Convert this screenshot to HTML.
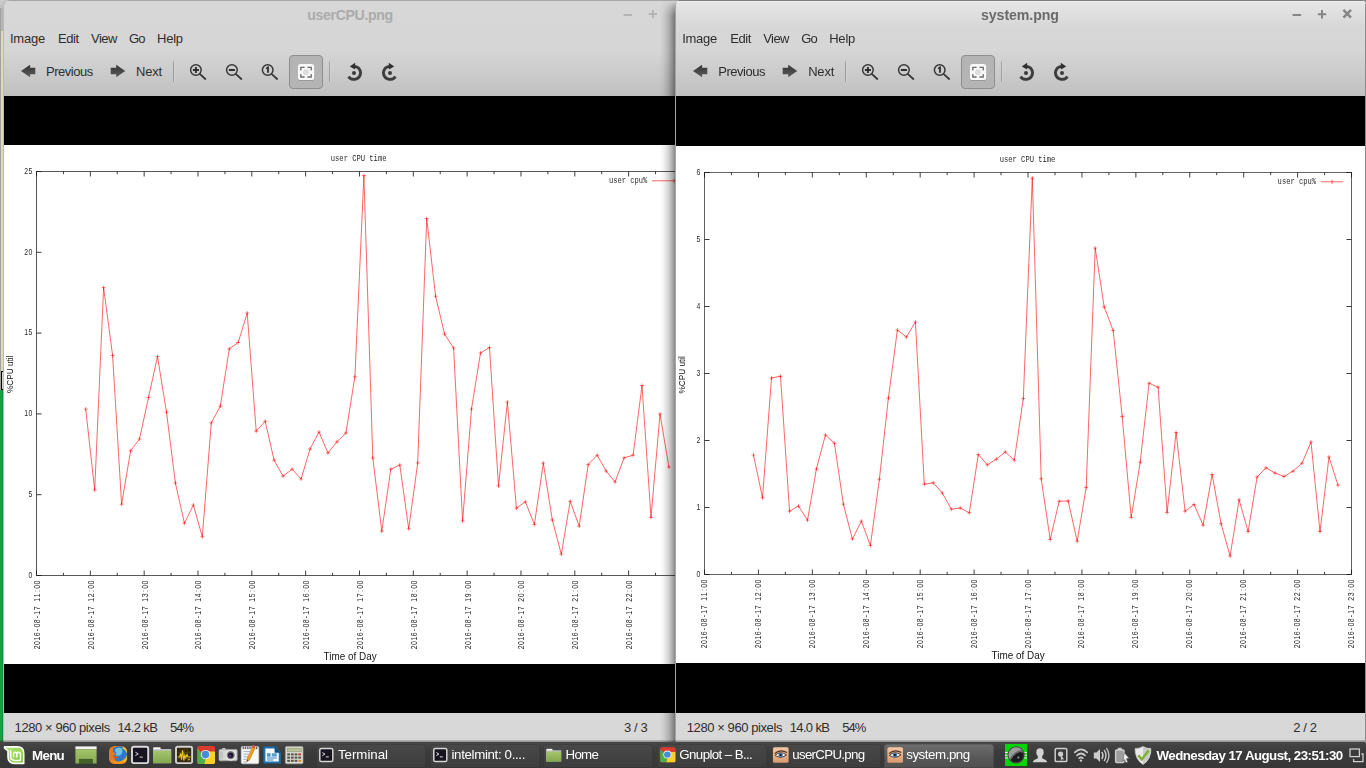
<!DOCTYPE html>
<html lang="en">
<head>
<meta charset="utf-8">
<title>Desktop</title>
<style>
html,body{margin:0;padding:0}
body{width:1366px;height:768px;overflow:hidden;position:relative;background:linear-gradient(90deg,#1d9e45 0,#1d9e45 2px,#178c3c 2px,#178c3c 3px,#1d9e45 3px);font-family:"Liberation Sans",sans-serif;font-size:13px;color:#2e2e2e}
.abs{position:absolute}
#strip{position:absolute;left:0;top:0;width:4px;height:390px;background:linear-gradient(90deg,#a2a2a0 0,#a2a2a0 1px,#dcdcb8 1px,#dcdcb8 3px,#b8b8b8 3px)}
#strip i{position:absolute;left:1px;top:371px;width:2px;height:19px;border:1px solid #000;border-right:0;box-sizing:border-box;width:3px;background:#d9dab9}
.win{position:absolute;top:0;height:743px;background:#d6d6d6;overflow:hidden;border-radius:5px 5px 0 0}
#w1{left:3px;width:700px;border-radius:7px 5px 0 0;border-left:1px solid #b9b9b9;box-sizing:border-box}
#w2{left:675px;width:691px;border-left:1px solid #a4a4a4;box-sizing:border-box;border-radius:5px 5px 0 0}
#shadow{position:absolute;left:660px;top:0;width:15px;height:743px;background:linear-gradient(90deg,rgba(0,0,0,0),rgba(0,0,0,.05) 25%,rgba(0,0,0,.16) 55%,rgba(0,0,0,.32) 82%,rgba(0,0,0,.46));-webkit-mask-image:linear-gradient(180deg,rgba(0,0,0,0) 0,rgba(0,0,0,.6) 8px,#000 16px);mask-image:linear-gradient(180deg,rgba(0,0,0,0) 0,rgba(0,0,0,.6) 8px,#000 16px)}
.chrome{position:absolute;left:0;top:0;right:0;height:96px;background:linear-gradient(#a6a6a6 0,#a6a6a6 1px,#d7d7d7 1px,#d6d6d6 50px,#c0c0c0 96px)}
#w2 .chrome{background:linear-gradient(#7c7c7c 0,#7c7c7c 1px,#f3f3f3 1px,#e6e6e6 2.5px,#d7d7d7 27px,#d6d6d6 50px,#c0c0c0 96px)}
.title{position:absolute;top:6px;left:0;right:0;text-align:center;font-weight:bold;font-size:13.5px;line-height:18px}
.canvas{position:absolute;left:0;right:0;top:96px;height:617px;background:#000}
.status{position:absolute;left:0;right:0;top:713px;height:30px;background:#d8d8d8}
.t{position:absolute;white-space:nowrap;line-height:16px}
svg{position:absolute;overflow:visible}
svg.plot{overflow:hidden;will-change:transform}
.gd text{font-family:"Liberation Mono",monospace;font-size:9.4px;fill:#2a2a2a}
.gd text.n{font-family:"Liberation Sans",sans-serif;font-size:8.6px}
text.tt{font-family:"Liberation Sans",sans-serif;fill:#161616}
#panel{position:absolute;left:0;top:743px;width:1366px;height:25px;background:linear-gradient(#454545,#3a3a3a 40%,#373737);color:#fff}
#panel:before{content:'';position:absolute;left:0;right:0;top:-3px;height:3px;background:linear-gradient(rgba(0,0,0,.08),rgba(0,0,0,.3) 34%,rgba(0,0,0,.3) 66%,#464646 67%,#464646)}
.tb{position:absolute;top:1px;height:24px;width:110px;border-radius:4px 4px 0 0;background:linear-gradient(#484848,#3d3d3d);box-shadow:inset 0 0 0 1px rgba(0,0,0,.12)}
.tb.on{background:linear-gradient(#6e6e6e,#575757 60%,#505050)}
.pt{position:absolute;white-space:nowrap;color:#fff;font-size:13.3px;line-height:16px;top:4px}
</style>
</head>
<body>
<div id="strip"><i></i></div>
<div class="abs" style="left:0;top:0;width:4px;height:31px;background:linear-gradient(90deg,#a2a2a2 1px,#b4b4b4 1px)"></div><div class="abs" style="left:0;top:0;width:12px;height:8px;background:linear-gradient(135deg,#d2d2d2,#b4b4b4 70%)"></div>

<!-- LEFT WINDOW -->
<div class="win" id="w1">
 <div class="chrome"></div>
 <svg class="abs" style="left:0;top:0" width="420" height="96" viewBox="4 0 420 96">
<defs>
<linearGradient id="ag1" x1="0" y1="0" x2="0" y2="1"><stop offset="0" stop-color="#343434"/><stop offset="1" stop-color="#5c5c5c"/></linearGradient>
</defs>
<path d="M21 71L30.1 64.7V67.7H35.3V74.3H30.1V77.3Z" fill="url(#ag1)"/>
<path d="M125.3 71L116.2 64.7V67.7H110.7V74.3H116.2V77.3Z" fill="url(#ag1)"/>
<path d="M173.5 61.5V82M329.6 61.5V82" stroke="#9b9b9b" stroke-width="1"/>
<path d="M174.5 61.5V82M330.6 61.5V82" stroke="#dcdcdc" stroke-width="1" stroke-opacity=".6"/>
<g fill="none" stroke="#383838" stroke-width="1.5">
<circle cx="195.9" cy="70" r="5.3"/><circle cx="231.9" cy="70" r="5.3"/><circle cx="267.7" cy="70" r="5.3"/>
<path d="M200 74.1L205.3 79M236 74.1L241.3 79M271.8 74.1L277.1 79" stroke-width="1.8" stroke-linecap="round"/>
</g>
<path d="M192.9 70H198.9M195.9 67V73M228.9 70H234.9" stroke="#2e2e2e" stroke-width="1.9" fill="none"/>
<path d="M266.2 68.6L268 67.3V72.8" stroke="#2a2a2a" stroke-width="1.7" fill="none"/>
<rect x="289.5" y="55.5" width="33" height="33" rx="3.5" fill="#b4b4b4" stroke="#8f8f8f"/>
<rect x="298" y="64.8" width="16.2" height="16" rx="2.6" fill="#8e8e8e"/><rect x="298" y="64.1" width="16.2" height="16" rx="2.6" fill="#f8f8f8"/>
<circle cx="306" cy="72.2" r="3" fill="#dcdcdc"/>
<path d="M300.8 70.4V67.4H304.6M307.4 67.4H311.2V70.4M311.2 74V77H307.4M304.6 77H300.8V74" fill="none" stroke="#6c6c6c" stroke-width="1.3"/>
<g fill="none" stroke="#3c3c3c" stroke-width="2.8">
<path d="M354.6 66.3A6.6 6.6 0 1 1 348.5 76.6"/>
<path d="M389.4 66.3A6.6 6.6 0 1 0 395.5 76.6"/>
</g>
<path d="M349.8 66.4L355.2 62.7V69.4Z" fill="#2e2e2e"/>
<path d="M394.2 66.4L388.8 62.7V69.4Z" fill="#2e2e2e"/>
<circle cx="354" cy="72.9" r="2" fill="#3a3a3a"/><circle cx="390" cy="72.9" r="2" fill="#3a3a3a"/>
</svg><svg class="abs" style="left:606px;top:0" width="66" height="28" viewBox="610 0 66 28"><g fill="none" stroke="#b3b3b3" stroke-width="1.8"><path d="M623.6 15H632"/><path d="M648.8 14.2H657M652.9 10.1V18.3"/></g></svg><span class="t" style="left:6.0px;top:31.0px;letter-spacing:-0.254px;">Image</span>
<span class="t" style="left:54.0px;top:31.0px;letter-spacing:-0.401px;">Edit</span>
<span class="t" style="left:87.0px;top:31.0px;letter-spacing:-0.557px;">View</span>
<span class="t" style="left:125.0px;top:31.0px;letter-spacing:-0.903px;">Go</span>
<span class="t" style="left:153.0px;top:31.0px;letter-spacing:-0.214px;">Help</span>
<span class="t" style="left:42.0px;top:63.9px;letter-spacing:-0.478px;">Previous</span>
<span class="t" style="left:132.0px;top:63.9px;letter-spacing:-0.209px;">Next</span>
<span class="t" style="left:303.3px;top:6.7px;letter-spacing:-0.398px;font-weight:bold;color:#ababab;font-size:14.2px">userCPU.png</span>
 <div class="canvas"></div>
 <div class="status"></div>
 <span class="t" style="left:10.6px;top:719.5px;letter-spacing:-0.417px;">1280 × 960 pixels</span>
<span class="t" style="left:113.5px;top:719.5px;letter-spacing:-0.630px;">14.2 kB</span>
<span class="t" style="left:166.0px;top:719.5px;letter-spacing:-1.009px;">54%</span>
<span class="t" style="left:620.0px;top:719.5px;letter-spacing:-0.402px;">3 / 3</span>
</div>
<svg class="plot" style="left:4px;top:145px" width="692" height="519" viewBox="4 145 692 519">
<rect x="4" y="145" width="692" height="519" fill="#fff"/>
<rect x="36.5" y="171.5" width="646.0" height="404.0" fill="none" stroke="#585858" stroke-width="1" shape-rendering="crispEdges"/>
<path d="M36.50 575.5v-5M36.50 171.5v5M63.41 575.5v-2.7M63.41 171.5v2.7M90.33 575.5v-5M90.33 171.5v5M117.25 575.5v-2.7M117.25 171.5v2.7M144.16 575.5v-5M144.16 171.5v5M171.07 575.5v-2.7M171.07 171.5v2.7M197.99 575.5v-5M197.99 171.5v5M224.91 575.5v-2.7M224.91 171.5v2.7M251.82 575.5v-5M251.82 171.5v5M278.74 575.5v-2.7M278.74 171.5v2.7M305.65 575.5v-5M305.65 171.5v5M332.56 575.5v-2.7M332.56 171.5v2.7M359.48 575.5v-5M359.48 171.5v5M386.40 575.5v-2.7M386.40 171.5v2.7M413.31 575.5v-5M413.31 171.5v5M440.23 575.5v-2.7M440.23 171.5v2.7M467.14 575.5v-5M467.14 171.5v5M494.06 575.5v-2.7M494.06 171.5v2.7M520.97 575.5v-5M520.97 171.5v5M547.88 575.5v-2.7M547.88 171.5v2.7M574.80 575.5v-5M574.80 171.5v5M601.71 575.5v-2.7M601.71 171.5v2.7M628.63 575.5v-5M628.63 171.5v5M655.54 575.5v-2.7M655.54 171.5v2.7M682.46 575.5v-5M682.46 171.5v5M36.5 575.50h5M682.5 575.50h-5M36.5 494.70h5M682.5 494.70h-5M36.5 413.90h5M682.5 413.90h-5M36.5 333.10h5M682.5 333.10h-5M36.5 252.30h5M682.5 252.30h-5M36.5 171.50h5M682.5 171.50h-5" fill="none" stroke="#1a1a1a" stroke-width=".85"/>
<g class="gd">
<text class="n" transform="translate(28.58 577.80) scale(0.8 1)" x="-0.00" y="0">0</text>
<text class="n" transform="translate(28.58 497.00) scale(0.8 1)" x="-0.00" y="0">5</text>
<text class="n" transform="translate(24.26 416.20) scale(0.8 1)" x="-0.00 5.40" y="0">10</text>
<text class="n" transform="translate(24.26 335.40) scale(0.8 1)" x="-0.00 5.40" y="0">15</text>
<text class="n" transform="translate(24.26 254.60) scale(0.8 1)" x="-0.00 5.40" y="0">20</text>
<text class="n" transform="translate(24.26 173.80) scale(0.8 1)" x="-0.00 5.40" y="0">25</text>
<text class="n" transform="translate(39.90 649.20) rotate(-90) scale(0.8 1)" x="-0.00 5.40 10.80 16.20 22.56 27.00 32.40 38.76 43.20 48.60 55.19 59.40 64.80 71.39 75.60 81.00" y="0">2016-08-17 11:00</text>
<text class="n" transform="translate(93.73 649.20) rotate(-90) scale(0.8 1)" x="-0.00 5.40 10.80 16.20 22.56 27.00 32.40 38.76 43.20 48.60 55.19 59.40 64.80 71.39 75.60 81.00" y="0">2016-08-17 12:00</text>
<text class="n" transform="translate(147.56 649.20) rotate(-90) scale(0.8 1)" x="-0.00 5.40 10.80 16.20 22.56 27.00 32.40 38.76 43.20 48.60 55.19 59.40 64.80 71.39 75.60 81.00" y="0">2016-08-17 13:00</text>
<text class="n" transform="translate(201.39 649.20) rotate(-90) scale(0.8 1)" x="-0.00 5.40 10.80 16.20 22.56 27.00 32.40 38.76 43.20 48.60 55.19 59.40 64.80 71.39 75.60 81.00" y="0">2016-08-17 14:00</text>
<text class="n" transform="translate(255.22 649.20) rotate(-90) scale(0.8 1)" x="-0.00 5.40 10.80 16.20 22.56 27.00 32.40 38.76 43.20 48.60 55.19 59.40 64.80 71.39 75.60 81.00" y="0">2016-08-17 15:00</text>
<text class="n" transform="translate(309.05 649.20) rotate(-90) scale(0.8 1)" x="-0.00 5.40 10.80 16.20 22.56 27.00 32.40 38.76 43.20 48.60 55.19 59.40 64.80 71.39 75.60 81.00" y="0">2016-08-17 16:00</text>
<text class="n" transform="translate(362.88 649.20) rotate(-90) scale(0.8 1)" x="-0.00 5.40 10.80 16.20 22.56 27.00 32.40 38.76 43.20 48.60 55.19 59.40 64.80 71.39 75.60 81.00" y="0">2016-08-17 17:00</text>
<text class="n" transform="translate(416.71 649.20) rotate(-90) scale(0.8 1)" x="-0.00 5.40 10.80 16.20 22.56 27.00 32.40 38.76 43.20 48.60 55.19 59.40 64.80 71.39 75.60 81.00" y="0">2016-08-17 18:00</text>
<text class="n" transform="translate(470.54 649.20) rotate(-90) scale(0.8 1)" x="-0.00 5.40 10.80 16.20 22.56 27.00 32.40 38.76 43.20 48.60 55.19 59.40 64.80 71.39 75.60 81.00" y="0">2016-08-17 19:00</text>
<text class="n" transform="translate(524.37 649.20) rotate(-90) scale(0.8 1)" x="-0.00 5.40 10.80 16.20 22.56 27.00 32.40 38.76 43.20 48.60 55.19 59.40 64.80 71.39 75.60 81.00" y="0">2016-08-17 20:00</text>
<text class="n" transform="translate(578.20 649.20) rotate(-90) scale(0.8 1)" x="-0.00 5.40 10.80 16.20 22.56 27.00 32.40 38.76 43.20 48.60 55.19 59.40 64.80 71.39 75.60 81.00" y="0">2016-08-17 21:00</text>
<text class="n" transform="translate(632.03 649.20) rotate(-90) scale(0.8 1)" x="-0.00 5.40 10.80 16.20 22.56 27.00 32.40 38.76 43.20 48.60 55.19 59.40 64.80 71.39 75.60 81.00" y="0">2016-08-17 22:00</text>
<text class="n" transform="translate(685.86 649.20) rotate(-90) scale(0.8 1)" x="-0.00 5.40 10.80 16.20 22.56 27.00 32.40 38.76 43.20 48.60 55.19 59.40 64.80 71.39 75.60 81.00" y="0">2016-08-17 23:00</text>
<text transform="translate(330.80 161.00)" textLength="55.66" lengthAdjust="spacingAndGlyphs">user CPU time</text>
<text transform="translate(608.92 183.40)" textLength="38.38" lengthAdjust="spacingAndGlyphs">user cpu%</text>
</g>
<text class="tt" style="font-size:9.8px" transform="translate(13.2 393) rotate(-90)" textLength="37.4" lengthAdjust="spacingAndGlyphs">%CPU util</text>
<text class="tt" style="font-size:10.9px" x="323.6" y="659.9" textLength="53" lengthAdjust="spacingAndGlyphs">Time of Day</text>
<g fill="none" stroke="#f00" stroke-width=".75" stroke-opacity=".8">
<polyline points="85.7,409.0 94.7,490.0 103.6,287.5 112.6,355.5 121.6,504.2 130.6,450.8 139.5,439.0 148.5,397.5 157.5,356.5 166.5,412.2 175.4,483.0 184.4,523.2 193.4,505.0 202.3,536.8 211.3,422.8 220.3,406.2 229.3,348.8 238.2,342.5 247.2,313.0 256.2,431.2 265.2,421.2 274.1,460.2 283.1,476.2 292.1,469.2 301.1,479.0 310.0,449.0 319.0,432.0 328.0,453.0 336.9,441.8 345.9,433.0 354.9,376.8 363.9,175.5 372.8,458.0 381.8,531.2 390.8,469.2 399.8,465.0 408.7,528.8 417.7,463.0 426.7,218.5 435.6,296.2 444.6,334.2 453.6,348.0 462.6,521.0 471.5,409.0 480.5,353.0 489.5,347.5 498.5,486.0 507.4,402.0 516.4,508.2 525.4,501.8 534.4,524.5 543.3,463.0 552.3,520.0 561.3,554.2 570.2,501.2 579.2,526.2 588.2,464.5 597.2,455.2 606.1,471.0 615.1,482.0 624.1,457.8 633.1,455.2 642.0,385.5 651.0,517.5 660.0,414.0 668.9,467.0"/>
<path d="M83.7 409.0h4M85.7 407.0v4M92.7 490.0h4M94.7 488.0v4M101.6 287.5h4M103.6 285.5v4M110.6 355.5h4M112.6 353.5v4M119.6 504.2h4M121.6 502.2v4M128.6 450.8h4M130.6 448.8v4M137.5 439.0h4M139.5 437.0v4M146.5 397.5h4M148.5 395.5v4M155.5 356.5h4M157.5 354.5v4M164.5 412.2h4M166.5 410.2v4M173.4 483.0h4M175.4 481.0v4M182.4 523.2h4M184.4 521.2v4M191.4 505.0h4M193.4 503.0v4M200.3 536.8h4M202.3 534.8v4M209.3 422.8h4M211.3 420.8v4M218.3 406.2h4M220.3 404.2v4M227.3 348.8h4M229.3 346.8v4M236.2 342.5h4M238.2 340.5v4M245.2 313.0h4M247.2 311.0v4M254.2 431.2h4M256.2 429.2v4M263.2 421.2h4M265.2 419.2v4M272.1 460.2h4M274.1 458.2v4M281.1 476.2h4M283.1 474.2v4M290.1 469.2h4M292.1 467.2v4M299.1 479.0h4M301.1 477.0v4M308.0 449.0h4M310.0 447.0v4M317.0 432.0h4M319.0 430.0v4M326.0 453.0h4M328.0 451.0v4M334.9 441.8h4M336.9 439.8v4M343.9 433.0h4M345.9 431.0v4M352.9 376.8h4M354.9 374.8v4M361.9 175.5h4M363.9 173.5v4M370.8 458.0h4M372.8 456.0v4M379.8 531.2h4M381.8 529.2v4M388.8 469.2h4M390.8 467.2v4M397.8 465.0h4M399.8 463.0v4M406.7 528.8h4M408.7 526.8v4M415.7 463.0h4M417.7 461.0v4M424.7 218.5h4M426.7 216.5v4M433.6 296.2h4M435.6 294.2v4M442.6 334.2h4M444.6 332.2v4M451.6 348.0h4M453.6 346.0v4M460.6 521.0h4M462.6 519.0v4M469.5 409.0h4M471.5 407.0v4M478.5 353.0h4M480.5 351.0v4M487.5 347.5h4M489.5 345.5v4M496.5 486.0h4M498.5 484.0v4M505.4 402.0h4M507.4 400.0v4M514.4 508.2h4M516.4 506.2v4M523.4 501.8h4M525.4 499.8v4M532.4 524.5h4M534.4 522.5v4M541.3 463.0h4M543.3 461.0v4M550.3 520.0h4M552.3 518.0v4M559.3 554.2h4M561.3 552.2v4M568.2 501.2h4M570.2 499.2v4M577.2 526.2h4M579.2 524.2v4M586.2 464.5h4M588.2 462.5v4M595.2 455.2h4M597.2 453.2v4M604.1 471.0h4M606.1 469.0v4M613.1 482.0h4M615.1 480.0v4M622.1 457.8h4M624.1 455.8v4M631.1 455.2h4M633.1 453.2v4M640.0 385.5h4M642.0 383.5v4M649.0 517.5h4M651.0 515.5v4M658.0 414.0h4M660.0 412.0v4M666.9 467.0h4M668.9 465.0v4" stroke-width=".6"/>
<path d="M652 180.8H696M674.0 178.8v4"/>
</g>
</svg>

<div id="shadow"></div>
<div class="abs" style="left:1358px;top:0;width:8px;height:8px;background:#8b8b8b"></div>
<!-- RIGHT WINDOW -->
<div class="win" id="w2">
 <div class="chrome"></div>
 <svg class="abs" style="left:0;top:0" width="420" height="96" viewBox="4 0 420 96">
<defs>
<linearGradient id="ag2" x1="0" y1="0" x2="0" y2="1"><stop offset="0" stop-color="#343434"/><stop offset="1" stop-color="#5c5c5c"/></linearGradient>
</defs>
<path d="M21 71L30.1 64.7V67.7H35.3V74.3H30.1V77.3Z" fill="url(#ag2)"/>
<path d="M125.3 71L116.2 64.7V67.7H110.7V74.3H116.2V77.3Z" fill="url(#ag2)"/>
<path d="M173.5 61.5V82M329.6 61.5V82" stroke="#9b9b9b" stroke-width="1"/>
<path d="M174.5 61.5V82M330.6 61.5V82" stroke="#dcdcdc" stroke-width="1" stroke-opacity=".6"/>
<g fill="none" stroke="#383838" stroke-width="1.5">
<circle cx="195.9" cy="70" r="5.3"/><circle cx="231.9" cy="70" r="5.3"/><circle cx="267.7" cy="70" r="5.3"/>
<path d="M200 74.1L205.3 79M236 74.1L241.3 79M271.8 74.1L277.1 79" stroke-width="1.8" stroke-linecap="round"/>
</g>
<path d="M192.9 70H198.9M195.9 67V73M228.9 70H234.9" stroke="#2e2e2e" stroke-width="1.9" fill="none"/>
<path d="M266.2 68.6L268 67.3V72.8" stroke="#2a2a2a" stroke-width="1.7" fill="none"/>
<rect x="289.5" y="55.5" width="33" height="33" rx="3.5" fill="#b4b4b4" stroke="#8f8f8f"/>
<rect x="298" y="64.8" width="16.2" height="16" rx="2.6" fill="#8e8e8e"/><rect x="298" y="64.1" width="16.2" height="16" rx="2.6" fill="#f8f8f8"/>
<circle cx="306" cy="72.2" r="3" fill="#dcdcdc"/>
<path d="M300.8 70.4V67.4H304.6M307.4 67.4H311.2V70.4M311.2 74V77H307.4M304.6 77H300.8V74" fill="none" stroke="#6c6c6c" stroke-width="1.3"/>
<g fill="none" stroke="#3c3c3c" stroke-width="2.8">
<path d="M354.6 66.3A6.6 6.6 0 1 1 348.5 76.6"/>
<path d="M389.4 66.3A6.6 6.6 0 1 0 395.5 76.6"/>
</g>
<path d="M349.8 66.4L355.2 62.7V69.4Z" fill="#2e2e2e"/>
<path d="M394.2 66.4L388.8 62.7V69.4Z" fill="#2e2e2e"/>
<circle cx="354" cy="72.9" r="2" fill="#3a3a3a"/><circle cx="390" cy="72.9" r="2" fill="#3a3a3a"/>
</svg><svg class="abs" style="left:604px;top:0" width="86" height="28" viewBox="1280 0 86 28"><g fill="none" stroke="#868686" stroke-width="2"><path d="M1292.5 15H1301.2"/><path d="M1317.8 14.2H1326.2M1322 10V18.4"/><path d="M1343.4 9.8L1351 17.6M1351 9.8L1343.4 17.6" stroke-width="2.4"/></g></svg><span class="t" style="left:6.2px;top:31.0px;letter-spacing:-0.254px;">Image</span>
<span class="t" style="left:54.2px;top:31.0px;letter-spacing:-0.401px;">Edit</span>
<span class="t" style="left:87.2px;top:31.0px;letter-spacing:-0.557px;">View</span>
<span class="t" style="left:125.2px;top:31.0px;letter-spacing:-0.903px;">Go</span>
<span class="t" style="left:153.2px;top:31.0px;letter-spacing:-0.214px;">Help</span>
<span class="t" style="left:42.2px;top:63.9px;letter-spacing:-0.478px;">Previous</span>
<span class="t" style="left:132.2px;top:63.9px;letter-spacing:-0.209px;">Next</span>
<span class="t" style="left:305.0px;top:6.7px;letter-spacing:-0.089px;font-weight:bold;color:#6b6b6b;font-size:14.2px">system.png</span>
 <div class="canvas"></div>
 <div class="status"></div>
 <span class="t" style="left:10.8px;top:719.5px;letter-spacing:-0.417px;">1280 × 960 pixels</span>
<span class="t" style="left:113.7px;top:719.5px;letter-spacing:-0.630px;">14.0 kB</span>
<span class="t" style="left:166.2px;top:719.5px;letter-spacing:-1.009px;">54%</span>
<span class="t" style="left:617.2px;top:719.5px;letter-spacing:-0.379px;">2 / 2</span>
</div>
<div class="abs" style="left:1365px;top:4px;width:1px;height:739px;background:#8c8c8c;z-index:5"></div>
<svg class="plot" style="left:676px;top:146px" width="689" height="517" viewBox="676 146 689 517">
<rect x="676" y="146" width="689" height="517" fill="#fff"/>
<rect x="704.5" y="172.5" width="647.0" height="402.0" fill="none" stroke="#626262" stroke-width="1" shape-rendering="crispEdges"/>
<path d="M704.50 574.5v-5M704.50 172.5v5M731.46 574.5v-2.7M731.46 172.5v2.7M758.42 574.5v-5M758.42 172.5v5M785.38 574.5v-2.7M785.38 172.5v2.7M812.34 574.5v-5M812.34 172.5v5M839.30 574.5v-2.7M839.30 172.5v2.7M866.26 574.5v-5M866.26 172.5v5M893.22 574.5v-2.7M893.22 172.5v2.7M920.18 574.5v-5M920.18 172.5v5M947.14 574.5v-2.7M947.14 172.5v2.7M974.10 574.5v-5M974.10 172.5v5M1001.06 574.5v-2.7M1001.06 172.5v2.7M1028.02 574.5v-5M1028.02 172.5v5M1054.98 574.5v-2.7M1054.98 172.5v2.7M1081.94 574.5v-5M1081.94 172.5v5M1108.90 574.5v-2.7M1108.90 172.5v2.7M1135.86 574.5v-5M1135.86 172.5v5M1162.82 574.5v-2.7M1162.82 172.5v2.7M1189.78 574.5v-5M1189.78 172.5v5M1216.74 574.5v-2.7M1216.74 172.5v2.7M1243.70 574.5v-5M1243.70 172.5v5M1270.66 574.5v-2.7M1270.66 172.5v2.7M1297.62 574.5v-5M1297.62 172.5v5M1324.58 574.5v-2.7M1324.58 172.5v2.7M1351.54 574.5v-5M1351.54 172.5v5M704.5 574.50h5M1351.5 574.50h-5M704.5 507.50h5M1351.5 507.50h-5M704.5 440.50h5M1351.5 440.50h-5M704.5 373.50h5M1351.5 373.50h-5M704.5 306.50h5M1351.5 306.50h-5M704.5 239.50h5M1351.5 239.50h-5M704.5 172.50h5M1351.5 172.50h-5" fill="none" stroke="#1a1a1a" stroke-width=".85"/>
<g class="gd">
<text class="n" transform="translate(696.58 576.80) scale(0.8 1)" x="-0.00" y="0">0</text>
<text class="n" transform="translate(696.58 509.80) scale(0.8 1)" x="-0.00" y="0">1</text>
<text class="n" transform="translate(696.58 442.80) scale(0.8 1)" x="-0.00" y="0">2</text>
<text class="n" transform="translate(696.58 375.80) scale(0.8 1)" x="-0.00" y="0">3</text>
<text class="n" transform="translate(696.58 308.80) scale(0.8 1)" x="-0.00" y="0">4</text>
<text class="n" transform="translate(696.58 241.80) scale(0.8 1)" x="-0.00" y="0">5</text>
<text class="n" transform="translate(696.58 174.80) scale(0.8 1)" x="-0.00" y="0">6</text>
<text class="n" transform="translate(707.00 648.20) rotate(-90) scale(0.8 1)" x="-0.00 5.40 10.80 16.20 22.56 27.00 32.40 38.76 43.20 48.60 55.19 59.40 64.80 71.39 75.60 81.00" y="0">2016-08-17 11:00</text>
<text class="n" transform="translate(760.92 648.20) rotate(-90) scale(0.8 1)" x="-0.00 5.40 10.80 16.20 22.56 27.00 32.40 38.76 43.20 48.60 55.19 59.40 64.80 71.39 75.60 81.00" y="0">2016-08-17 12:00</text>
<text class="n" transform="translate(814.84 648.20) rotate(-90) scale(0.8 1)" x="-0.00 5.40 10.80 16.20 22.56 27.00 32.40 38.76 43.20 48.60 55.19 59.40 64.80 71.39 75.60 81.00" y="0">2016-08-17 13:00</text>
<text class="n" transform="translate(868.76 648.20) rotate(-90) scale(0.8 1)" x="-0.00 5.40 10.80 16.20 22.56 27.00 32.40 38.76 43.20 48.60 55.19 59.40 64.80 71.39 75.60 81.00" y="0">2016-08-17 14:00</text>
<text class="n" transform="translate(922.68 648.20) rotate(-90) scale(0.8 1)" x="-0.00 5.40 10.80 16.20 22.56 27.00 32.40 38.76 43.20 48.60 55.19 59.40 64.80 71.39 75.60 81.00" y="0">2016-08-17 15:00</text>
<text class="n" transform="translate(976.60 648.20) rotate(-90) scale(0.8 1)" x="-0.00 5.40 10.80 16.20 22.56 27.00 32.40 38.76 43.20 48.60 55.19 59.40 64.80 71.39 75.60 81.00" y="0">2016-08-17 16:00</text>
<text class="n" transform="translate(1030.52 648.20) rotate(-90) scale(0.8 1)" x="-0.00 5.40 10.80 16.20 22.56 27.00 32.40 38.76 43.20 48.60 55.19 59.40 64.80 71.39 75.60 81.00" y="0">2016-08-17 17:00</text>
<text class="n" transform="translate(1084.44 648.20) rotate(-90) scale(0.8 1)" x="-0.00 5.40 10.80 16.20 22.56 27.00 32.40 38.76 43.20 48.60 55.19 59.40 64.80 71.39 75.60 81.00" y="0">2016-08-17 18:00</text>
<text class="n" transform="translate(1138.36 648.20) rotate(-90) scale(0.8 1)" x="-0.00 5.40 10.80 16.20 22.56 27.00 32.40 38.76 43.20 48.60 55.19 59.40 64.80 71.39 75.60 81.00" y="0">2016-08-17 19:00</text>
<text class="n" transform="translate(1192.28 648.20) rotate(-90) scale(0.8 1)" x="-0.00 5.40 10.80 16.20 22.56 27.00 32.40 38.76 43.20 48.60 55.19 59.40 64.80 71.39 75.60 81.00" y="0">2016-08-17 20:00</text>
<text class="n" transform="translate(1246.20 648.20) rotate(-90) scale(0.8 1)" x="-0.00 5.40 10.80 16.20 22.56 27.00 32.40 38.76 43.20 48.60 55.19 59.40 64.80 71.39 75.60 81.00" y="0">2016-08-17 21:00</text>
<text class="n" transform="translate(1300.12 648.20) rotate(-90) scale(0.8 1)" x="-0.00 5.40 10.80 16.20 22.56 27.00 32.40 38.76 43.20 48.60 55.19 59.40 64.80 71.39 75.60 81.00" y="0">2016-08-17 22:00</text>
<text class="n" transform="translate(1354.04 648.20) rotate(-90) scale(0.8 1)" x="-0.00 5.40 10.80 16.20 22.56 27.00 32.40 38.76 43.20 48.60 55.19 59.40 64.80 71.39 75.60 81.00" y="0">2016-08-17 23:00</text>
<text transform="translate(999.70 162.00)" textLength="55.66" lengthAdjust="spacingAndGlyphs">user CPU time</text>
<text transform="translate(1277.62 184.40)" textLength="38.38" lengthAdjust="spacingAndGlyphs">user cpu%</text>
</g>
<text class="tt" style="font-size:9.8px" transform="translate(685.2 393.5) rotate(-90)" textLength="37.4" lengthAdjust="spacingAndGlyphs">%CPU util</text>
<text class="tt" style="font-size:10.9px" x="991.6" y="658.9" textLength="53" lengthAdjust="spacingAndGlyphs">Time of Day</text>
<g fill="none" stroke="#f00" stroke-width=".75" stroke-opacity=".8">
<polyline points="753.5,455.0 762.5,497.8 771.5,378.0 780.5,376.2 789.5,511.2 798.5,506.0 807.5,520.2 816.4,469.0 825.4,435.0 834.4,443.2 843.4,504.2 852.4,539.0 861.4,521.2 870.4,545.5 879.4,479.2 888.4,398.0 897.4,330.0 906.4,337.0 915.4,322.0 924.3,484.2 933.3,482.8 942.3,493.0 951.3,509.2 960.3,508.0 969.3,512.8 978.3,454.5 987.3,464.8 996.3,459.2 1005.3,452.0 1014.3,460.2 1023.3,398.5 1032.3,178.0 1041.2,478.8 1050.2,539.5 1059.2,501.2 1068.2,501.0 1077.2,541.2 1086.2,487.5 1095.2,248.0 1104.2,307.0 1113.2,330.5 1122.2,416.5 1131.2,517.5 1140.2,462.2 1149.1,383.2 1158.1,387.2 1167.1,512.5 1176.1,432.5 1185.1,511.2 1194.1,504.5 1203.1,525.2 1212.1,474.5 1221.1,523.8 1230.1,556.0 1239.1,499.8 1248.1,531.5 1257.1,477.0 1266.0,467.8 1275.0,473.0 1284.0,476.5 1293.0,471.2 1302.0,463.2 1311.0,442.0 1320.0,531.5 1329.0,457.0 1338.0,485.2"/>
<path d="M751.5 455.0h4M753.5 453.0v4M760.5 497.8h4M762.5 495.8v4M769.5 378.0h4M771.5 376.0v4M778.5 376.2h4M780.5 374.2v4M787.5 511.2h4M789.5 509.2v4M796.5 506.0h4M798.5 504.0v4M805.5 520.2h4M807.5 518.2v4M814.4 469.0h4M816.4 467.0v4M823.4 435.0h4M825.4 433.0v4M832.4 443.2h4M834.4 441.2v4M841.4 504.2h4M843.4 502.2v4M850.4 539.0h4M852.4 537.0v4M859.4 521.2h4M861.4 519.2v4M868.4 545.5h4M870.4 543.5v4M877.4 479.2h4M879.4 477.2v4M886.4 398.0h4M888.4 396.0v4M895.4 330.0h4M897.4 328.0v4M904.4 337.0h4M906.4 335.0v4M913.4 322.0h4M915.4 320.0v4M922.3 484.2h4M924.3 482.2v4M931.3 482.8h4M933.3 480.8v4M940.3 493.0h4M942.3 491.0v4M949.3 509.2h4M951.3 507.2v4M958.3 508.0h4M960.3 506.0v4M967.3 512.8h4M969.3 510.8v4M976.3 454.5h4M978.3 452.5v4M985.3 464.8h4M987.3 462.8v4M994.3 459.2h4M996.3 457.2v4M1003.3 452.0h4M1005.3 450.0v4M1012.3 460.2h4M1014.3 458.2v4M1021.3 398.5h4M1023.3 396.5v4M1030.3 178.0h4M1032.3 176.0v4M1039.2 478.8h4M1041.2 476.8v4M1048.2 539.5h4M1050.2 537.5v4M1057.2 501.2h4M1059.2 499.2v4M1066.2 501.0h4M1068.2 499.0v4M1075.2 541.2h4M1077.2 539.2v4M1084.2 487.5h4M1086.2 485.5v4M1093.2 248.0h4M1095.2 246.0v4M1102.2 307.0h4M1104.2 305.0v4M1111.2 330.5h4M1113.2 328.5v4M1120.2 416.5h4M1122.2 414.5v4M1129.2 517.5h4M1131.2 515.5v4M1138.2 462.2h4M1140.2 460.2v4M1147.1 383.2h4M1149.1 381.2v4M1156.1 387.2h4M1158.1 385.2v4M1165.1 512.5h4M1167.1 510.5v4M1174.1 432.5h4M1176.1 430.5v4M1183.1 511.2h4M1185.1 509.2v4M1192.1 504.5h4M1194.1 502.5v4M1201.1 525.2h4M1203.1 523.2v4M1210.1 474.5h4M1212.1 472.5v4M1219.1 523.8h4M1221.1 521.8v4M1228.1 556.0h4M1230.1 554.0v4M1237.1 499.8h4M1239.1 497.8v4M1246.1 531.5h4M1248.1 529.5v4M1255.1 477.0h4M1257.1 475.0v4M1264.0 467.8h4M1266.0 465.8v4M1273.0 473.0h4M1275.0 471.0v4M1282.0 476.5h4M1284.0 474.5v4M1291.0 471.2h4M1293.0 469.2v4M1300.0 463.2h4M1302.0 461.2v4M1309.0 442.0h4M1311.0 440.0v4M1318.0 531.5h4M1320.0 529.5v4M1327.0 457.0h4M1329.0 455.0v4M1336.0 485.2h4M1338.0 483.2v4" stroke-width=".6"/>
<path d="M1320.8 181.8H1343.3M1332.05 179.8v4"/>
</g>
</svg>

<div id="panel">
<div class="tb" style="left:315.6px"></div>
<div class="tb" style="left:429.5px"></div>
<div class="tb" style="left:543.2px"></div>
<div class="tb" style="left:657px"></div>
<div class="tb" style="left:770.5px"></div>
<div class="tb on" style="left:884.3px"></div><svg class="abs" style="left:0;top:0" width="1366" height="25" viewBox="0 743 1366 25">
<defs>
<linearGradient id="gg" x1="0" y1="0" x2="1" y2="1"><stop offset="0" stop-color="#b6e67e"/><stop offset=".6" stop-color="#93d44e"/><stop offset="1" stop-color="#6cbc2c"/></linearGradient>
<linearGradient id="fg" x1="0" y1="0" x2="0" y2="1"><stop offset="0" stop-color="#a3c46c"/><stop offset="1" stop-color="#84a94e"/></linearGradient>
<linearGradient id="eg" x1="0" y1="0" x2="0" y2="1"><stop offset="0" stop-color="#f3c8a4"/><stop offset="1" stop-color="#d99a70"/></linearGradient>
<g id="term"><rect x=".8" y=".8" width="13" height="13.2" rx="1.6" fill="#18141f" stroke="#d6d6d6" stroke-width="1.5"/><path d="M3.4 5L5.9 6.5L3.4 8M6.8 9.3H9.8" fill="none" stroke="#e4e4e4" stroke-width="1"/></g>
<g id="fold"><path d="M0 2Q0 1.2 .8 1.2H5.6Q6.2 1.2 6.4 2L6.6 2.6H15V14H0Z" fill="#bdbdbd"/><rect x=".5" y="1.5" width="5.4" height="1.4" fill="#fafafa"/><rect x="0" y="4" width="15" height="10" fill="url(#fg)"/></g>
<clipPath id="ccs"><rect x="0" y="0" width="18" height="18" rx="2.6"/></clipPath>
<g id="chr"><g clip-path="url(#ccs)"><rect width="18" height="18" fill="#dc3a2c"/><path d="M0 2.6L9 9L9.4 18H0Z" fill="#4cae4c"/><path d="M18 4.8H9L9.2 9L7.4 18H18Z" fill="#f9cf2a"/><path d="M0 0H18V5.4H9L4 7Z" fill="#dc3a2c"/></g><circle cx="8.4" cy="8.6" r="4.7" fill="#eef2f6"/><circle cx="8.4" cy="8.6" r="3.8" fill="#4a8bd6"/></g>
<g id="eye"><rect x="0" y="0" width="15.6" height="15.6" rx="1.6" fill="url(#eg)"/><path d="M2 8.2Q7 3.2 13.6 7.6Q8 12.2 2 8.2Z" fill="#f4f4f4" stroke="#3a2a22" stroke-width=".9"/><circle cx="7.6" cy="7.8" r="2.3" fill="#4a78b0"/><circle cx="7.6" cy="7.8" r="1" fill="#111"/><path d="M1.6 6.4Q7 1.6 14 5.4" fill="none" stroke="#4a3428" stroke-width="1.1"/></g>
</defs>
<!-- mint logo -->
<path d="M4.6 746.9H17.4Q23.7 746.9 23.7 753.2V763.4H14.6Q8 763.4 8 756.8V750.9L4.6 748.2Z" fill="url(#gg)" stroke="#fff" stroke-width="1.6" stroke-linejoin="round"/>
<path d="M10.7 750.2V756.6Q10.7 760.4 14.5 760.4H20.4V754.4Q20.4 752.2 18.6 752.2Q16.9 752.2 16.9 754.4V757.4M16.9 754.4Q16.9 752.2 15.2 752.2Q13.6 752.2 13.6 754.4V757.4" fill="none" stroke="#fff" stroke-width="1.5" stroke-linejoin="round"/>
<!-- show desktop -->
<rect x="75.4" y="746.4" width="21.2" height="2.8" fill="#f4f4f4"/>
<rect x="75.4" y="749.2" width="21.2" height="14.3" fill="url(#fg)"/>
<rect x="79.4" y="759.2" width="13.2" height="4.3" fill="#44602b" stroke="#34491f" stroke-width=".5"/>
<!-- firefox -->
<rect x="109" y="745.9" width="18.1" height="18.1" rx="5.5" fill="#e9781e"/>
<path d="M113.2 748.4Q117 745.4 122.4 746.6Q127 748.6 127 754.6Q126.6 760.4 121.6 762.2Q116 762.6 114.6 758.6Q113.4 755.6 115.4 753Q112 752.2 113.2 748.4Z" fill="#2f79cc"/>
<path d="M115.2 749.2Q118.6 746.6 121.8 748.6Q123.4 751.6 121.2 754.6Q118.6 756.6 115.8 755.2Q115.2 753.6 116.6 752.4Q114.2 751.4 115.2 749.2Z" fill="#6cc3e4"/>
<path d="M123 747Q127.4 748.4 127 753.4Q125.6 749.6 122.4 748.2Z" fill="#f7cf2c"/>
<path d="M127 755.6Q127.2 763.8 119.6 764Q111.6 764.2 109.4 758Q113.2 762.6 118.8 761.6Q124.6 760.6 127 755.6Z" fill="#f29c1c"/>
<path d="M124.4 760.4Q126.6 758 127 755.6Q127.2 761.2 123.6 763Z" fill="#f7d02c"/>
<path d="M112.6 755Q115.2 757.4 119 756.2Q117.8 758.8 114.6 758.6Q113 757.4 112.6 755Z" fill="#d95a16"/>
<!-- terminal launcher -->
<rect x="132" y="746.7" width="16.2" height="16.4" rx="1.8" fill="#18141f" stroke="#d9d9d9" stroke-width="1.9"/>
<path d="M135.4 752.2L138.2 753.9L135.4 755.6M139.6 757.1H142.8" fill="none" stroke="#d4d4d4" stroke-width="1"/>
<!-- folder -->
<path d="M153 748.2Q153 747.3 153.9 747.3H159.8Q160.6 747.3 160.8 748.2L161 749H171.2V763.2H153Z" fill="#bdbdbd"/>
<rect x="153.6" y="747.6" width="6.6" height="1.7" fill="#fafafa"/>
<rect x="153" y="750.8" width="18.2" height="12.4" fill="url(#fg)"/>
<!-- system monitor -->
<rect x="176" y="746.7" width="16.1" height="16.4" rx="1.8" fill="#33280f" stroke="#d2d2d2" stroke-width="1.9"/>
<path d="M178 752.6H190.2M178 758.6H190.2M181 748.6V761.2M184.2 748.6V761.2M187.4 748.6V761.2" stroke="#6d5614" stroke-width=".5"/>
<path d="M177.6 757H179.6L180.6 753.4L181.6 759.6L182.6 750.2L183.8 760.4L184.8 755.2L185.8 757.8L187 754.6L188 757H190.6" fill="none" stroke="#e9c525" stroke-width="1.1"/>
<circle cx="189" cy="759.6" r=".9" fill="#e9c525"/>
<!-- chrome launcher -->
<g transform="translate(197.1 746)"><use href="#chr"/></g>
<!-- camera -->
<rect x="219" y="749.4" width="18.2" height="11.4" rx="1.2" fill="#d6d6d6" stroke="#a2a2a2" stroke-width=".7"/>
<rect x="222" y="748" width="3.6" height="1.8" rx=".6" fill="#c4c4c4"/>
<rect x="219.4" y="751.4" width="3.4" height="8" fill="#c3c3c3"/>
<circle cx="230.7" cy="755.2" r="4.7" fill="#7d7d7d" stroke="#f3f3f3" stroke-width="1.1"/>
<circle cx="230.7" cy="755.2" r="2.7" fill="#1d1626"/><circle cx="230" cy="755.8" r="1" fill="#7a2fb0"/>
<!-- notes -->
<rect x="241.2" y="746.4" width="17.6" height="17.4" rx="1.6" fill="#f7f7f5" stroke="#c9c9c9" stroke-width=".6"/>
<rect x="241.6" y="746.6" width="16.8" height="2.8" fill="#d2d2d2"/>
<path d="M243.4 746.6V749M245.6 746.6V749M247.8 746.6V749M250 746.6V749M252.2 746.6V749M254.4 746.6V749M256.6 746.6V749" stroke="#4a4a4a" stroke-width=".9"/>
<path d="M243.4 751.6H250M243.4 754.2H248.6M243.4 756.8H248M243.4 759.4H246.4M243.4 762H247" stroke="#7d9ed0" stroke-width=".8"/>
<path d="M252.6 746.8L255.2 748L249.6 760L246.8 761.6L247.2 758.6Z" fill="#f19d1e" stroke="#c26c10" stroke-width=".5"/>
<path d="M246.8 761.6L247.1 759.6L248.6 760.6Z" fill="#4a3a2a"/>
<circle cx="253.6" cy="746.6" r="1.5" fill="#e05050"/>
<!-- writer -->
<path d="M263.4 746.6H275.4L280.8 752V763.6H263.4Z" fill="#1d6fae"/>
<path d="M265.4 748.6H274.6L278.8 752.8V761.6H265.4Z" fill="#f4f8fb"/>
<path d="M274.6 746.8V752.8H280.6Z" fill="#0f4a78"/>
<rect x="267" y="753.4" width="3.6" height="1.3" fill="#1d6fae"/><rect x="267" y="755.2" width="3.6" height="1.3" fill="#1d6fae"/>
<rect x="271.8" y="753.2" width="5" height="3.4" fill="#5b9fd4"/>
<path d="M267 758H276.8M267 760H273.4" stroke="#3a86c4" stroke-width="1.1"/>
<!-- calculator -->
<rect x="285.4" y="746.4" width="17.6" height="17.4" rx="1.4" fill="#dcdad0" stroke="#a3a195" stroke-width=".7"/>
<rect x="287.2" y="748.2" width="14" height="3.6" fill="#b7c29a" stroke="#878f70" stroke-width=".5"/>
<g fill="#55524a"><rect x="287.2" y="753.4" width="2.8" height="2"/><rect x="290.9" y="753.4" width="2.8" height="2"/><rect x="294.6" y="753.4" width="2.8" height="2"/><rect x="287.2" y="756.6" width="2.8" height="2"/><rect x="290.9" y="756.6" width="2.8" height="2"/><rect x="294.6" y="756.6" width="2.8" height="2"/><rect x="287.2" y="759.8" width="2.8" height="2"/><rect x="290.9" y="759.8" width="2.8" height="2"/><rect x="294.6" y="759.8" width="2.8" height="2"/><rect x="298.3" y="756.6" width="2.8" height="2"/></g>
<rect x="298.3" y="753.4" width="2.8" height="2" fill="#c63a2e"/><rect x="298.3" y="759.8" width="2.8" height="2" fill="#e08a22"/>
<!-- window list icons -->
<g transform="translate(319 747.6)"><use href="#term"/></g>
<g transform="translate(433 747.6)"><use href="#term"/></g>
<g transform="translate(546.2 747.6)"><use href="#fold"/></g>
<g transform="translate(660.1 747.3) scale(.865 .85)"><use href="#chr"/></g>
<g transform="translate(773 747.2)"><use href="#eye"/></g>
<g transform="translate(887.4 747.2)"><use href="#eye"/></g>
<!-- tray -->
<rect x="1005" y="744" width="22" height="22" fill="#06d606"/>
<path d="M1005 752.4H1027M1005 755.2H1027M1005 757.9H1027" stroke="#f2fff2" stroke-width="1"/>
<circle cx="1016.1" cy="754.9" r="8.6" fill="#4b474b"/>
<circle cx="1016.1" cy="754.9" r="7.6" fill="#9c9c9c"/>
<path d="M1010.4 759.9A7.6 7.6 0 0 0 1023.4 752.6Q1019.6 751.4 1016.6 753.2Q1013.4 755.2 1010.4 759.9Z" fill="#1c1c1c"/>
<path d="M1021.6 749.7A7.6 7.6 0 0 1 1023.4 752.6Q1019.6 751.4 1016.6 753.2Q1013.4 755.2 1010.4 759.9A7.6 7.6 0 0 1 1009.6 758.8Q1014 751 1021.6 749.7Z" fill="#6a6a6a"/>
<circle cx="1018.4" cy="757.6" r="1" fill="#9a9a9a"/>
<!-- user -->
<ellipse cx="1040" cy="752.4" rx="3.7" ry="4.1" fill="#d2d2d2"/>
<path d="M1032.8 762.2Q1033.4 759.6 1037.6 758.4L1038 755.6H1042L1042.4 758.4Q1046.6 759.6 1047.2 762.2Z" fill="#d2d2d2"/>
<!-- removable -->
<rect x="1055.2" y="748.6" width="11.6" height="13" rx="1.2" fill="none" stroke="#cdcdcd" stroke-width="1.5"/>
<circle cx="1060.6" cy="754" r="2.6" fill="#cdcdcd"/><path d="M1060.6 754L1064 759.4L1061.8 759.2L1061 761Z" fill="#cdcdcd"/>
<!-- wifi -->
<g fill="none" stroke="#cdcdcd" stroke-width="1.7" stroke-linecap="round"><path d="M1074.8 752.4Q1081 746.4 1087.2 752.4"/><path d="M1077 755.4Q1081 751.6 1085 755.4"/><path d="M1079.2 758.2Q1081 756.6 1082.8 758.2"/></g>
<circle cx="1081" cy="760.6" r="1.2" fill="#cdcdcd"/>
<!-- volume -->
<path d="M1093.8 752.6H1096.4L1100 749V762L1096.4 758.4H1093.8Z" fill="#cdcdcd"/>
<g fill="none" stroke="#cdcdcd" stroke-width="1.4" stroke-linecap="round"><path d="M1102 752.4Q1104 755.5 1102 758.6"/><path d="M1104.4 750.4Q1107.6 755.5 1104.4 760.6"/><path d="M1106.8 748.6Q1111 755.5 1106.8 762.4" stroke="#bdbdbd"/></g>
<!-- battery -->
<rect x="1115.6" y="750" width="8.4" height="12.6" rx="1" fill="#9d9d9d" stroke="#cdcdcd" stroke-width="1.4"/>
<rect x="1117.8" y="747.8" width="4" height="2.2" fill="#cdcdcd"/>
<path d="M1124.2 752.6L1129.4 758.6L1126.6 758.6L1127.8 762.4L1125.8 762.8L1124.6 759.4L1123 761Z" fill="#efefef" stroke="#3a3a3a" stroke-width=".5"/>
<!-- shield -->
<path d="M1143 746.4Q1147 748.8 1151 748.4Q1151.4 759 1143 764.6Q1134.6 759 1135 748.4Q1139 748.8 1143 746.4Z" fill="#e9e9e9" stroke="#bdbdbd" stroke-width=".6"/>
<path d="M1143 746.4Q1147 748.8 1151 748.4Q1151.4 759 1143 764.6Z" fill="#c9c9c9"/>
<path d="M1138.2 755.4L1141.8 759.4L1148.6 750.6" fill="none" stroke="#7fb02c" stroke-width="2.4"/>
<!-- windows icon -->
<rect x="1350" y="749" width="9.4" height="7.6" fill="none" stroke="#cdcdcd" stroke-width="1.3"/>
<path d="M1353.6 759V761.6H1363V754H1361.4" fill="none" stroke="#cdcdcd" stroke-width="1.3"/>
</svg><span class="pt" style="left:32.0px;top:5.2px;letter-spacing:-0.665px;font-weight:bold">Menu</span>
<span class="pt" style="left:338.0px;top:4.0px;letter-spacing:-0.033px;">Terminal</span>
<span class="pt" style="left:451.5px;top:4.0px;letter-spacing:-0.347px;">intelmint: 0....</span>
<span class="pt" style="left:565.5px;top:4.0px;letter-spacing:-0.709px;">Home</span>
<span class="pt" style="left:679.3px;top:4.0px;letter-spacing:-0.601px;">Gnuplot – B...</span>
<span class="pt" style="left:792.3px;top:4.0px;letter-spacing:-0.707px;">userCPU.png</span>
<span class="pt" style="left:906.2px;top:4.0px;letter-spacing:-0.442px;">system.png</span>
<span class="pt" style="left:1156.5px;top:5.2px;letter-spacing:-0.535px;font-weight:bold">Wednesday 17 August, 23:51:30</span>
</div>
</body>
</html>
